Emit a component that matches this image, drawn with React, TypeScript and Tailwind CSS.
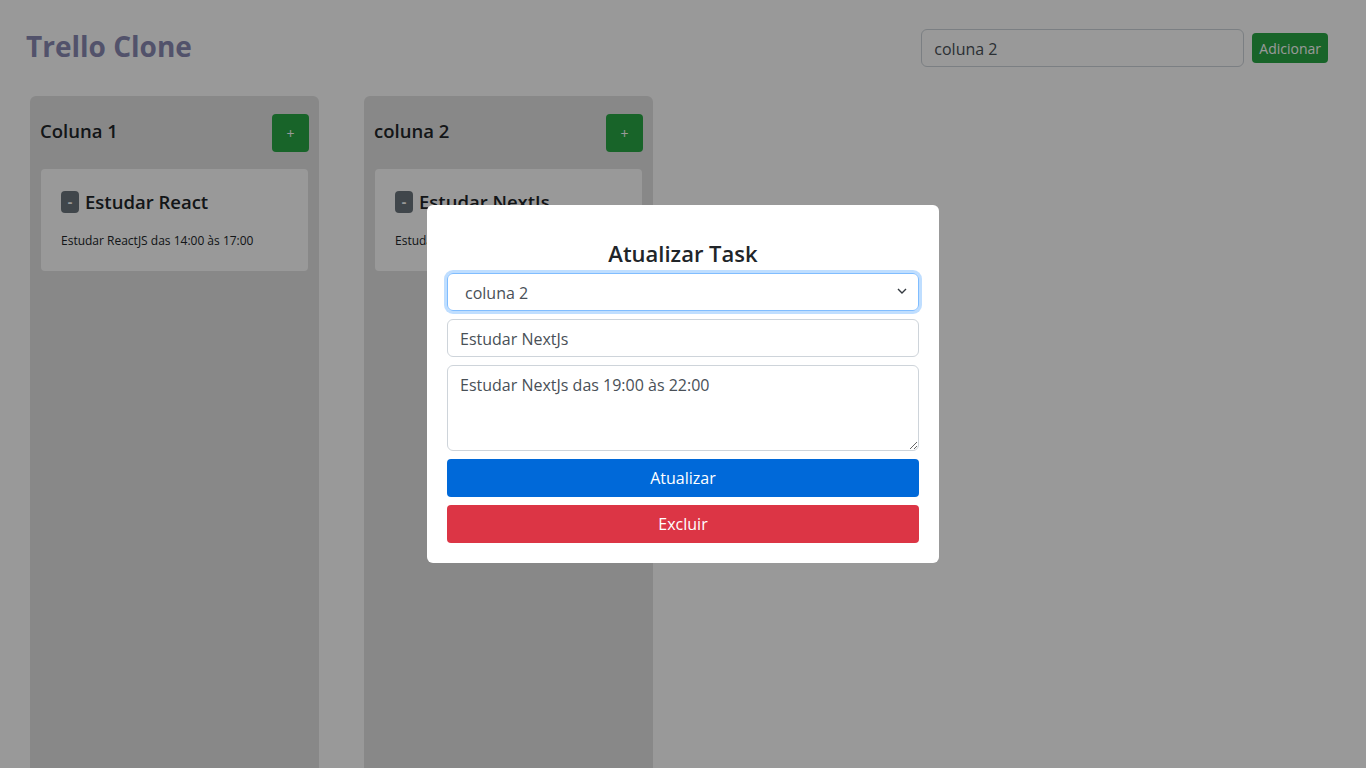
import React from "react";

const font = { fontFamily: '"Open Sans", "Noto Sans", Arial, sans-serif' };

function Column({ title, task, desc }: { title: string; task: string; desc: string }) {
  return (
    <div className="w-[289px] h-[720px] shrink-0 rounded-md bg-[#e3e3e3] px-[10px] pt-[18px]">
      <div className="flex items-center justify-between">
        <h2 className="-mt-[4px] text-[18.5px] font-semibold text-[#212529]">{title}</h2>
        <button className="h-[38px] w-[37px] rounded bg-[#28a745] text-[14px] text-white">+</button>
      </div>
      <div className="mt-[17px] mx-px rounded bg-white px-[20px] pt-[19px] pb-[21px]">
        <div className="flex items-center gap-[6px]">
          <span className="flex h-[22px] w-[18px] items-center justify-center rounded bg-[#6c757d] text-[14px] font-bold text-white">-</span>
          <span className="text-[18.5px] font-semibold text-[#212529]">{task}</span>
        </div>
        <p className="mt-[16px] text-[12px] leading-[18px] text-[#212529]">{desc}</p>
      </div>
    </div>
  );
}

export default function App() {
  return (
    <div className="relative h-screen w-full overflow-hidden bg-white" style={font}>
      <header className="flex items-center justify-between pl-[26px] pr-[38px] pt-[29px]">
        <h1 className="-mt-[4px] text-[28px] font-bold leading-[34px] text-[#8989b2]">Trello Clone</h1>
        <div className="flex items-center gap-2">
          <input
            readOnly
            value="coluna 2"
            className="h-[38px] w-[323px] rounded-md border border-[#ced4da] px-3 pt-[2px] text-[16px] text-[#495057]"
          />
          <button className="h-[30px] rounded bg-[#28a745] px-[7px] text-[14px] text-white">Adicionar</button>
        </div>
      </header>
      <main className="mt-[29px] flex gap-[45px] pl-[30px]">
        <Column title="Coluna 1" task="Estudar React" desc="Estudar ReactJS das 14:00 às 17:00" />
        <Column title="coluna 2" task="Estudar NextJs" desc="Estudar NextJs das 19:00 às 22:00" />
      </main>

      <div className="absolute inset-0 flex items-start justify-center bg-black/40 pt-[205px]">
        <div className="w-[512px] rounded-md bg-white px-[20px] pt-[34px] pb-[20px]">
          <h3 className="mb-[6px] text-center text-[22px] font-semibold leading-[28px] text-[#212529]">Atualizar Task</h3>
          <div className="flex flex-col gap-[8px]">
            <div className="relative">
              <div className="flex h-[38px] items-center rounded-md border border-[#80bdff] pl-[17px] pt-[2px] text-[16px] text-[#495057] shadow-[0_0_0_3px_rgba(0,123,255,0.25)]">
                coluna 2
              </div>
              <svg className="absolute right-[12px] top-[15px]" width="10" height="7" viewBox="0 0 10 7" fill="none">
                <path d="M1 1l4 4 4-4" stroke="#343a40" strokeWidth="1.4" />
              </svg>
            </div>
            <input
              readOnly
              value="Estudar NextJs"
              className="h-[38px] rounded-md border border-[#ced4da] px-3 pt-[2px] text-[16px] text-[#495057]"
            />
            <textarea
              readOnly
              value="Estudar NextJs das 19:00 às 22:00"
              className="h-[86px] rounded-md border border-[#ced4da] px-3 pt-[7px] text-[16px] text-[#495057]"
            />
            <button className="h-[38px] rounded bg-[#0069d9] text-[16px] font-medium text-white">Atualizar</button>
            <button className="h-[38px] rounded bg-[#dc3545] text-[16px] font-medium text-white">Excluir</button>
          </div>
        </div>
      </div>
    </div>
  );
}
